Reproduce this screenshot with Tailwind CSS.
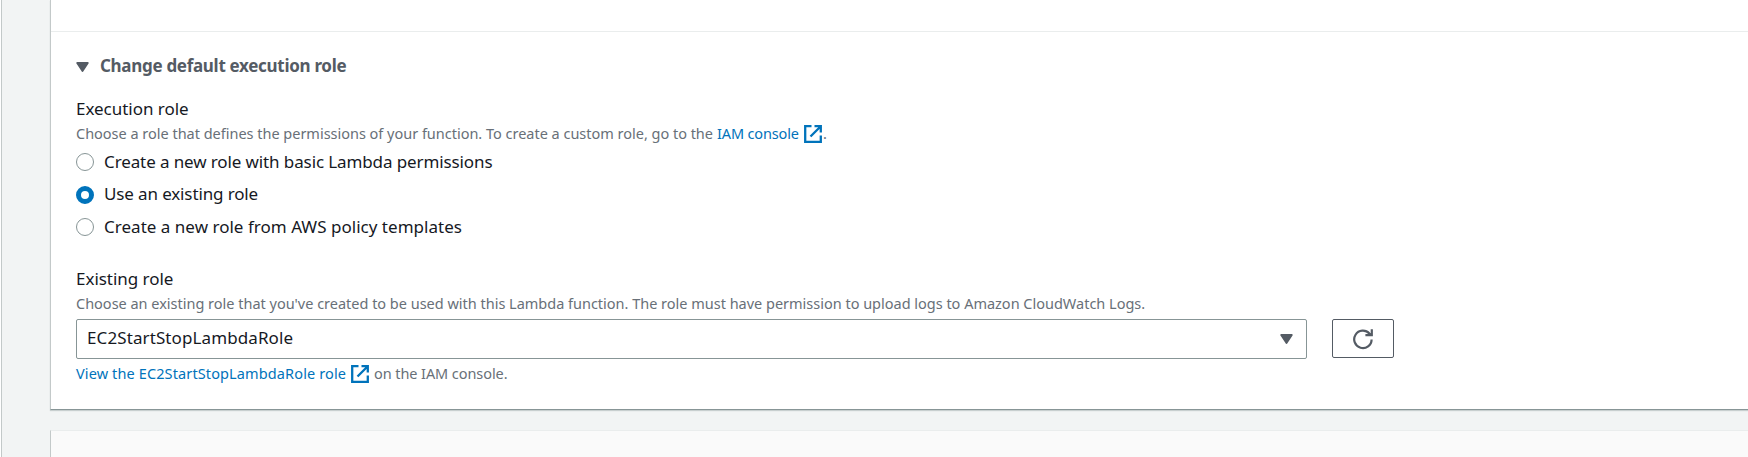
<!DOCTYPE html>
<html lang="en">
<head>
<meta charset="utf-8">
<title>Change default execution role</title>
<script src="https://cdn.jsdelivr.net/npm/@tailwindcss/browser@4"></script>
</head>
<body class="h-[457px] overflow-hidden bg-white font-['Noto_Sans',sans-serif] text-[17px] leading-6 text-[#16191f]">
<svg class="hidden">
  <symbol id="external" viewBox="0 0 18 18"><path d="M7.5 1.2H1.2V16.8H16.8V10.5M10.5 1.2H16.8V7.5M16 2L6.5 11.5" fill="none" stroke="currentColor" stroke-width="2.3"/></symbol>
  <symbol id="caret" viewBox="0 0 13 11"><path d="M1.2 1H11.8L6.5 9Z" fill="currentColor" stroke="currentColor" stroke-width="1.8" stroke-linejoin="round"/></symbol>
</svg>
<div class="ml-px h-full border-l border-[#c3c9c9] bg-[#f2f4f4] pl-12">
  <section class="h-[410px] border-b border-l border-b-[#879596] border-l-[#c3c9c9] bg-white shadow-[0_1px_1px_0_#c8cfcf]">
    <div class="h-8 border-b border-[#eaeded]"></div>
    <div class="flex flex-col items-start pl-[25px] pt-[22px] whitespace-nowrap">
      <h2 class="flex h-6 items-center gap-[11px] font-bold tracking-[-0.3px] text-[#545b64]">
        <svg class="mt-0.5 h-[11px] w-[13px]"><use href="#caret"/></svg>
        <span>Change default execution role</span>
      </h2>
      <h3 class="mt-[19px] tracking-[-0.03px]">Execution role</h3>
      <p class="mt-[2px] flex h-5 items-center text-[14.5px] leading-5 text-[#687078]"><span class="w-[641px] tracking-[-0.015px]">Choose a role that defines the permissions of your function. To create a custom role, go to the</span><a class="flex w-[105px] items-center justify-between tracking-[-0.15px] text-[#0073bb]">IAM console<svg class="mt-px h-[18px] w-[18px]"><use href="#external"/></svg></a><span class="ml-px">.</span></p>
      <label class="mt-[7px] flex h-6 items-center gap-[10px] tracking-[-0.11px]"><span class="size-[18px] rounded-full border-[1.5px] border-[#879596]"></span>Create a new role with basic Lambda permissions</label>
      <label class="mt-2 flex h-6 items-center gap-[10px] tracking-[-0.13px]"><span class="mt-0.5 size-[18px] rounded-full border-[5px] border-[#0073bb]"></span>Use an existing role</label>
      <label class="mt-[9px] flex h-6 items-center gap-[10px] tracking-[0.02px]"><span class="size-[18px] rounded-full border-[1.5px] border-[#879596]"></span>Create a new role from AWS policy templates</label>
      <h3 class="mt-[28px] tracking-[-0.03px]">Existing role</h3>
      <p class="mt-[2px] text-[14.5px] leading-5 tracking-[-0.01px] text-[#687078]">Choose an existing role that you've created to be used with this Lambda function. The role must have permission to upload logs to Amazon CloudWatch Logs.</p>
      <div class="mt-[6px] flex gap-[25px]">
        <div class="flex h-10 w-[1231px] items-center justify-between rounded-[2px] border border-[#879596] pl-[10px] pr-[13px]">
          <span class="-mt-0.5 tracking-[0.1px]">EC2StartStopLambdaRole</span>
          <svg class="h-[11px] w-[13px] text-[#545b64]"><use href="#caret"/></svg>
        </div>
        <button class="flex h-[39px] w-[62px] items-center justify-center rounded-[2px] border border-[#545b64] text-[#545b64]">
          <svg class="size-[22px]" viewBox="0 0 22 22" fill="none" stroke="currentColor" stroke-width="2.2"><path d="M19.6 11.4A8.7 8.7 0 1 1 17.4 5.6L19 7.2M19.8 1.2V7.2H13.4"/></svg>
        </button>
      </div>
      <p class="mt-1 flex h-5 items-center text-[14.5px] leading-5 text-[#687078]"><a class="flex w-[293px] items-center justify-between tracking-[0.12px] text-[#0073bb]">View the EC2StartStopLambdaRole role<svg class="mt-px h-[18px] w-[18px]"><use href="#external"/></svg></a><span class="ml-[5px] tracking-[-0.08px]">on the IAM console.</span></p>
    </div>
  </section>
  <section class="mt-5 h-[27px] border-l border-t border-l-[#c3c9c9] border-t-[#eaeded] bg-[#fafafa]"></section>
</div>
</body>
</html>
